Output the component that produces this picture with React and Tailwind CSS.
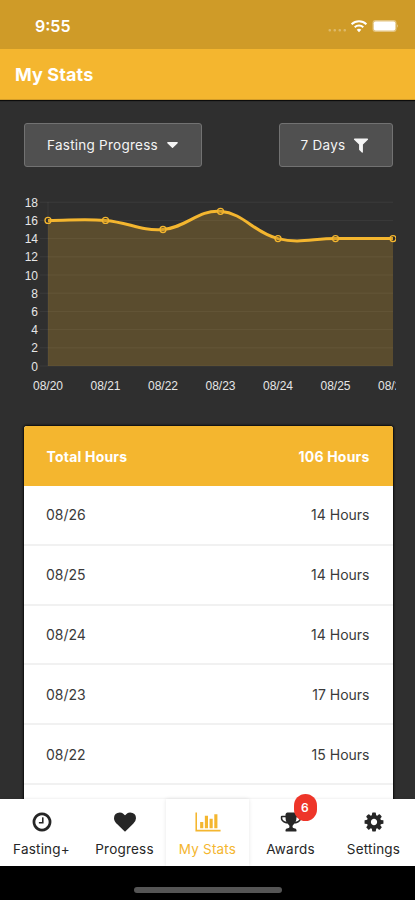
import React, { useState } from 'react';

// Font Awesome 4 glyphs on the 1792 grid
const ICONS = {
  clock: 'M1024 544v448q0 14-9 23t-23 9h-320q-14 0-23-9t-9-23v-64q0-14 9-23t23-9h224v-352q0-14 9-23t23-9h64q14 0 23 9t9 23zm416 352q0-148-73-273t-198-198-273-73-273 73-198 198-73 273 73 273 198 198 273 73 273-73 198-198 73-273zm224 0q0 209-103 385.5t-279.5 279.5-385.5 103-385.5-103-279.5-279.5-103-385.5 103-385.5 279.5-279.5 385.5-103 385.5 103 279.5 279.5 103 385.5z',
  heart: 'M896 1664q-26 0-44-18l-624-602q-10-8-27.5-26t-55.5-65.5-68-97.5-53.5-121-23.5-138q0-220 127-344t351-124q62 0 126.5 21.5t120 58 95.5 68.5 76 68q36-36 76-68t95.5-68.5 120-58 126.5-21.5q224 0 351 124t127 344q0 221-229 450l-623 600q-18 18-44 18z',
  chart: 'M640 896v512h-256v-512h256zm384-512v1024h-256v-1024h256zm1024 1152v128h-2048v-1536h128v1408h1920zm-640-896v768h-256v-768h256zm384-384v1152h-256v-1152h256z',
  trophy: 'M522 883q-74-162-74-371h-256v96q0 78 94.5 162t235.5 113zm1078-275v-96h-256q0 209-74 371 141-29 235.5-113t94.5-162zm128-128v128q0 71-41.5 143t-112 130-173 97.5-215.5 44.5q-42 54-95 95-38 34-52.5 72.5t-14.5 89.5q0 54 30.5 91t97.5 37q75 0 133.5 45.5t58.5 114.5v64q0 14-9 23t-23 9h-832q-14 0-23-9t-9-23v-64q0-69 58.5-114.5t133.5-45.5q67 0 97.5-37t30.5-91q0-51-14.5-89.5t-52.5-72.5q-53-41-95-95-113-5-215.5-44.5t-173-97.5-112-130-41.5-143v-128q0-40 28-68t68-28h288v-96q0-66 47-113t113-47h576q66 0 113 47t47 113v96h288q40 0 68 28t28 68z',
  cog: 'M1152 896q0-106-75-181t-181-75-181 75-75 181 75 181 181 75 181-75 75-181zm512-109v222q0 12-8 23t-20 13l-185 28q-19 54-39 91 35 50 107 138 10 12 10 25t-9 23q-27 37-99 108t-94 71q-12 0-26-9l-138-108q-44 23-91 38-16 136-29 186-7 28-36 28h-222q-14 0-24.5-8.5t-11.5-21.5l-28-184q-49-16-90-37l-141 107q-10 9-25 9-14 0-25-11-126-114-165-168-7-10-7-23 0-12 8-23 15-21 51-66.5t54-70.5q-27-50-41-99l-183-27q-13-2-21-12.5t-8-23.5v-222q0-12 8-23t19-13l186-28q14-46 39-92-40-57-107-138-10-12-10-24 0-10 9-23 26-36 98.5-107.5t94.5-71.5q13 0 26 10l138 107q44-23 91-38 16-136 29-186 7-28 36-28h222q14 0 24.5 8.5t11.5 21.5l28 184q49 16 90 37l142-107q9-9 24-9 13 0 25 10 129 119 165 170 7 8 7 22 0 12-8 23-15 21-51 66.5t-54 70.5q26 50 41 98l183 28q13 2 21 12.5t8 23.5z',
  filter: 'M1595 295q17 41-14 70l-493 493v742q0 42-39 59-13 5-25 5-27 0-45-19l-256-256q-19-19-19-45v-486l-493-493q-31-29-14-70 17-39 59-39h1280q42 0 59 39z',
  caret: 'M1408 704q0 26-19 45l-448 448q-19 19-45 19t-45-19l-448-448q-19-19-19-45t19-45 45-19h896q26 0 45 19t19 45z',
};

const STATS = [
  { date: '08/20', hours: 16 },
  { date: '08/21', hours: 16 },
  { date: '08/22', hours: 15 },
  { date: '08/23', hours: 17 },
  { date: '08/24', hours: 14 },
  { date: '08/25', hours: 14 },
  { date: '08/26', hours: 14 },
];

const TABS = [
  { label: 'Fasting+', icon: 'clock' },
  { label: 'Progress', icon: 'heart' },
  { label: 'My Stats', icon: 'chart', wide: true },
  { label: 'Awards', icon: 'trophy', badge: 6 },
  { label: 'Settings', icon: 'cog' },
];

function Icon({ name, wide, className }) {
  return (
    <svg viewBox={wide ? '0 0 2048 1792' : '0 0 1792 1792'} fill="currentColor" className={className}>
      <path d={ICONS[name]} />
    </svg>
  );
}

function StatusBar() {
  return (
    <div className="h-[49px] shrink-0 bg-[#cf9b28] flex items-center justify-between pl-[35px] pr-[17px] pt-[2px] text-white">
      <span className="text-[16px] font-semibold">9:55</span>
      <div className="flex items-center">
        <svg viewBox="0 0 70 14" className="w-[70px] h-[14px]" fill="currentColor">
          <g opacity="0.3">
            <rect x="0.5" y="10" width="2.5" height="2.5" rx="1" />
            <rect x="5.5" y="10" width="2.5" height="2.5" rx="1" />
            <rect x="10.5" y="10" width="2.5" height="2.5" rx="1" />
            <rect x="15.5" y="10" width="2.5" height="2.5" rx="1" />
          </g>
          <g fill="none" stroke="currentColor" strokeWidth="2">
            <path d="M23.6 5.2a10.6 10.6 0 0 1 14.8 0" />
            <path d="M26.7 8.3a6.3 6.3 0 0 1 8.6 0" />
          </g>
          <path d="M31 13.2l-2.3-2.4a3.4 3.4 0 0 1 4.6 0z" />
          <rect x="44.5" y="1" width="24" height="12" rx="3" opacity="0.4" />
          <rect x="45.8" y="2.4" width="21.5" height="9.2" rx="1.8" />
          <path d="M69 5.3q1.6 1.7 0 3.4z" opacity="0.5" />
        </svg>
      </div>
    </div>
  );
}

// Control points for a cardinal spline through the points
function buildCurve(points, tension = 0.4) {
  const controls = points.map((p, i) => {
    const prev = points[i - 1] || p;
    const next = points[i + 1] || p;
    const d01 = Math.hypot(p.x - prev.x, p.y - prev.y);
    const d12 = Math.hypot(next.x - p.x, next.y - p.y);
    const fa = (tension * d01) / (d01 + d12);
    const fb = (tension * d12) / (d01 + d12);
    return {
      before: { x: p.x - fa * (next.x - prev.x), y: p.y - fa * (next.y - prev.y) },
      after: { x: p.x + fb * (next.x - prev.x), y: p.y + fb * (next.y - prev.y) },
    };
  });
  let d = `M${points[0].x} ${points[0].y}`;
  for (let i = 1; i < points.length; i++) {
    const a = controls[i - 1].after;
    const b = controls[i].before;
    d += `C${a.x} ${a.y} ${b.x} ${b.y} ${points[i].x} ${points[i].y}`;
  }
  return d;
}

function StatsChart() {
  const left = 24;
  const bottom = 174;
  const stepX = 57.5;
  const stepY = 9.1;
  const right = left + stepX * (STATS.length - 1);
  const points = STATS.map((s, i) => ({ x: left + i * stepX, y: bottom - s.hours * stepY }));
  const curve = buildCurve(points);
  const ticks = [0, 2, 4, 6, 8, 10, 12, 14, 16, 18];

  return (
    <svg viewBox="0 0 372 210" className="block w-[372px] h-[210px] font-['Liberation_Sans',Arial,sans-serif] text-[12px]">
      {ticks.map((t) => (
        <g key={t}>
          <path d={`M${left - 8} ${bottom - t * stepY}H${right}`} stroke="#fff" strokeOpacity="0.06" />
          <text x="14" y={bottom - t * stepY + 4.6} textAnchor="end" fill="#e6e6e6">{t}</text>
        </g>
      ))}
      <path d={`M${left} 10V${bottom}`} stroke="#fff" strokeOpacity="0.06" />
      <path d={`${curve}V${bottom}H${left}Z`} fill="#f4b62f" fillOpacity="0.22" />
      <path d={curve} fill="none" stroke="#f4b62f" strokeWidth="3" />
      {points.map((p, i) => (
        <g key={STATS[i].date}>
          <circle cx={p.x} cy={p.y} r="3" fill="#000" fillOpacity="0.1" stroke="#f4b62f" strokeWidth="1.3" />
          <text x={p.x} y="198" textAnchor="middle" fill="#e6e6e6">{STATS[i].date}</text>
        </g>
      ))}
    </svg>
  );
}

export default function App() {
  const [active, setActive] = useState('My Stats');
  const total = STATS.reduce((sum, s) => sum + s.hours, 0);
  const rows = [...STATS].reverse();

  return (
    <div className="w-[415px] h-[900px] flex flex-col overflow-hidden bg-[#2f2f2f] font-[Inter,'Liberation_Sans',sans-serif]">
      <StatusBar />
      <header className="h-[51px] shrink-0 bg-[#f4b62f] flex items-center px-[15px] text-white border-b border-[#d39c28] z-10 shadow-[0_1px_1px_#0c0c0c]">
        <h1 className="text-[18px] font-bold tracking-[0.1px]">My Stats</h1>
      </header>

      <main className="flex-1 min-h-0 overflow-hidden pl-[23.5px] pr-[22.5px] pt-[23px]">
        <div className="flex justify-between">
          <button className="h-[44px] w-[178px] flex items-center justify-center gap-[9px] bg-[#505050] border border-[#727272] rounded-[3px] text-[13.5px] tracking-[0.25px] text-[#f4f4f4]">
            Fasting Progress
            <svg viewBox="384 640 1024 576" fill="currentColor" className="w-[11px] h-[6px]">
              <path d={ICONS.caret} />
            </svg>
          </button>
          <button className="h-[44px] w-[114px] flex items-center justify-center gap-[7px] bg-[#505050] border border-[#727272] rounded-[3px] text-[13.5px] tracking-[0.25px] text-[#f4f4f4]">
            7 Days
            <Icon name="filter" className="w-[18px] h-[18px]" />
          </button>
        </div>

        <div className="mt-[25px]">
          <StatsChart />
        </div>

        <div className="mt-[24px] w-[369px] rounded-[3px] overflow-hidden bg-white text-[14px] shadow-[0_0_2px_1px_#0c0c0c]">
          <div className="h-[60px] px-[23px] flex items-center justify-between bg-[#f4b62f] text-white font-bold text-[14px] tracking-[0.2px]">
            <span>Total Hours</span>
            <span>{total} Hours</span>
          </div>
          {rows.map((s) => (
            <div key={s.date} className="h-[59.8px] pl-[22.5px] pr-[23px] flex items-center justify-between text-[#3a3a3a] border-b-2 border-[#f1f1f1]">
              <span>{s.date}</span>
              <span>{s.hours} Hours</span>
            </div>
          ))}
        </div>
      </main>

      <nav className="h-[67px] shrink-0 grid grid-cols-5 bg-white shadow-[0_-1px_2px_rgba(0,0,0,0.06)] z-10">
        {TABS.map((tab) => (
          <button
            key={tab.label}
            onClick={() => setActive(tab.label)}
            className={`flex flex-col items-center pt-[12px] gap-[7px] text-[13.5px] leading-[18px] tracking-[0.2px] ${
              active === tab.label ? 'text-[#f4b62f] shadow-[0_0_4px_rgba(0,0,0,0.1)]' : 'text-[#262626]'
            }`}
          >
            <span className="relative">
              <Icon name={tab.icon} wide={tab.wide} className={tab.wide ? 'w-[26px] h-[22px]' : 'w-[22px] h-[22px]'} />
              {tab.badge && (
                <span className="absolute left-[14px] -top-[17px] w-[23px] h-[27px] rounded-full bg-[#ee3529] text-white text-[12px] font-semibold flex items-center justify-center">
                  {tab.badge}
                </span>
              )}
            </span>
            <span>{tab.label}</span>
          </button>
        ))}
      </nav>
      <footer className="h-[34px] shrink-0 bg-black flex justify-center pt-[21px] z-10">
        <div className="w-[148px] h-[6px] rounded-full bg-[#555]" />
      </footer>
    </div>
  );
}
